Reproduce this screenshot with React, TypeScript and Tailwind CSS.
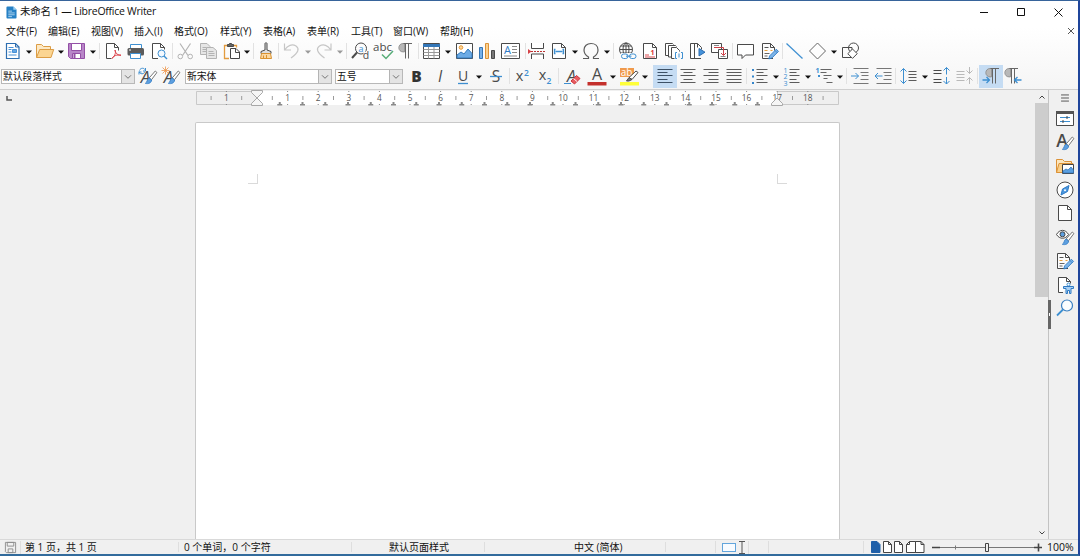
import type { ReactNode } from "react";
import clsx from "clsx";

const INK = "#4a4a4a";
const BLUE = "#3d8fd1";
const FADED = "#b9b9b9";

const menus = [
  { label: "文件(F)", width: "w-[42px]" },
  { label: "编辑(E)", width: "w-[43px]" },
  { label: "视图(V)", width: "w-[43px]" },
  { label: "插入(I)", width: "w-[40px]" },
  { label: "格式(O)", width: "w-[46px]" },
  { label: "样式(Y)", width: "w-[43px]" },
  { label: "表格(A)", width: "w-[44px]" },
  { label: "表单(R)", width: "w-[44px]" },
  { label: "工具(T)", width: "w-[42px]" },
  { label: "窗口(W)", width: "w-[47px]" },
  { label: "帮助(H)", width: "w-[40px]" },
];

// Every toolbar drawing lives on a 20x20 grid
function Icon({ children, className, color = INK }: { children: ReactNode; className?: string; color?: string }) {
  return (
    <svg
      viewBox="0 0 20 20"
      className={clsx("h-5 w-5 shrink-0 overflow-visible", className)}
      fill="none"
      stroke={color}
      strokeWidth="1"
    >
      {children}
    </svg>
  );
}

function Arrow({ className, faded }: { className?: string; faded?: boolean }) {
  return (
    <svg viewBox="0 0 6 4" className={clsx("mt-0.5 h-1 w-1.5 shrink-0", className)}>
      <path d="M0 .5h6L3 3.8z" fill={faded ? "#9a9a9a" : "#111"} />
    </svg>
  );
}

function Sep({ className }: { className?: string }) {
  return <span className={clsx("h-4 w-px shrink-0 bg-[#e2e2e2]", className)} />;
}

function Pressed({ children }: { children: ReactNode }) {
  return (
    <span className="-mx-0.5 flex h-[23px] w-6 shrink-0 items-center justify-center bg-[#c5dcf3]">{children}</span>
  );
}

function Combo({ value, className }: { value: string; className: string }) {
  return (
    <div className={clsx("mt-px flex h-[15px] shrink-0 border border-[#b8b8b8] bg-white", className)}>
      <span className="flex-1 overflow-hidden pl-px text-[9.8px] leading-[14px] whitespace-nowrap">{value}</span>
      <span className="flex w-[13px] items-center justify-center border-l border-[#b4b4b4] bg-[#e4e4e4]">
        <svg viewBox="0 0 8 6" className="h-1.5 w-2" fill="none" stroke="#666" strokeWidth=".9">
          <path d="M1 1.3l3 3 3-3" />
        </svg>
      </span>
    </div>
  );
}

function Glyph({ children, size = 14, y = 15, x = 10, weight = 400, fill = INK, italic }: {
  children: ReactNode; size?: number; y?: number; x?: number; weight?: number; fill?: string; italic?: boolean;
}) {
  return (
    <text x={x} y={y} fontSize={size} fontWeight={weight} fontStyle={italic ? "italic" : "normal"}
      fontFamily="'Open Sans', 'Noto Sans', sans-serif" textAnchor="middle" fill={fill} stroke="none">
      {children}
    </text>
  );
}

function Brush() {
  return (
    <>
      <path d="M17.3 5l1.6 1.5-5.4 7.2-2.300-1.800z" fill="#fff" stroke="#666" strokeWidth=".9" />
      <path d="M11 12l2.600 2c-.2 3.200-3.500 4.200-6.300 3.300 2.200-.8 1.500-4.300 3.700-5.300z" fill="#5d9fe0" stroke="#2e7ac4" strokeWidth=".8" />
    </>
  );
}

function Pencil() {
  return (
    <>
      <path d="M16.300 8.200l2.200 2.200-6.700 6.700-3 .8.8-3z" fill="#7db4e8" stroke="#2e7ac4" strokeWidth=".9" />
      <path d="M15 9.500l2.200 2.200" stroke="#2e7ac4" strokeWidth=".8" />
    </>
  );
}

function TrackDoc() {
  return (
    <>
      <path d="M13 17.500H2.500v-15h8l4 4v3" fill="#fcfcfc" />
      <path d="M10.500 2.500v4h4" />
      <path d="M4.500 6.500h4" stroke="#555" />
      <path d="M4.500 9.500h3m3 0h2" stroke="#e9a13b" />
      <path d="M4.500 12.500h5m-5 2.500h3" stroke="#666" />
      <Pencil />
    </>
  );
}

// Paragraph sign with the filled bowl
function Pilcrow({ dx = 0 }: { dx?: number }) {
  return (
    <g transform={`translate(${dx} 0)`}>
      <path d="M9.500 2.500H8a4.200 4.200 0 0 0 0 8.400h1.500z" fill="#b8b8b8" stroke="#888" strokeWidth=".8" />
      <path d="M8.500 2.500H17" stroke="#666" />
      <path d="M10.500 2.500v15m3-15v15" stroke="#666" />
    </g>
  );
}

function StandardBar() {
  return (
    <div className="flex h-6 items-center gap-[3px] pl-[3px]">
      <Icon color="#2e6eb0">
        <path d="M3.500 2.500h9l3.500 3.500v11.500H3.500z" fill="#fff" strokeWidth="1.200" />
        <path d="M12.500 2.500V6h3.500" />
        <path d="M5.500 6.500h5m-5 2h3m-3 2.500h3m-3 3h8" stroke="#4790d6" />
        <path d="M9.500 8.500h4v3h-4z" fill="#64a6e3" stroke="#4790d6" />
      </Icon>
      <Arrow />
      <Icon color="#dc9d45">
        <path d="M1.500 16.500v-13h5l2 2h7v3" fill="#fde9c4" />
        <path d="M1.500 16.500l3.200-8h14l-2.700 8z" fill="#fbd592" />
      </Icon>
      <Arrow />
      <Icon color="#9450a6">
        <path d="M1.500 2.500h16v15h-14l-2-2z" fill="#b886c8" />
        <path d="M4.500 2.500h10v7h-10z" fill="#fff" />
        <path d="M5.500 12.500h8v5h-8z" fill="#fff" />
        <path d="M7.500 13v4" strokeWidth="2" />
      </Icon>
      <Arrow />
      <Sep />
      <Icon>
        <path d="M8.500 17.500h-5v-15h8l4 4v3" fill="#fff" />
        <path d="M11.500 2.500v4h4" />
        <path d="M12 9c1.500 3-1 7-3 8.500 1-2.500 5-4.200 9-3.300-3 .6-6-2.500-6-5.200z" stroke="#dc4048" />
      </Icon>
      <Icon>
        <path d="M4.500 7V3.500h11V7" stroke={BLUE} fill="#fff" />
        <rect x="1.500" y="7" width="16.500" height="7.500" rx="1.500" fill="#5b5b5b" stroke="none" />
        <path d="M4.500 12.500h10v5h-10z" fill="#fff" stroke={BLUE} />
        <path d="M3 9h2" stroke="#fff" />
      </Icon>
      <Icon className="ml-px">
        <path d="M8 17.500H2.500v-15h8l4 4v2" fill="#fff" />
        <path d="M10.500 2.500v4h4" />
        <circle cx="11.500" cy="12.500" r="3.500" stroke={BLUE} fill="#f3f9ff" />
        <path d="M14 15l3 3" stroke={BLUE} strokeWidth="1.400" />
      </Icon>
      <Sep className="-ml-px" />
      <Icon className="-ml-px" color="#b3b3b3">
        <path d="M5 2.500l8 12M15.500 2.500l-8 12" strokeWidth="1.200" />
        <circle cx="5.300" cy="15.500" r="2.300" />
        <circle cx="15.200" cy="15.500" r="2.300" />
      </Icon>
      <Icon className="ml-px" color="#b3b3b3">
        <path d="M1.500 2.500H8l3 3v8H1.500zM3.500 6.500h4m-4 2h4m-4 2h4" fill="#e6e6e6" />
        <path d="M7.500 6.500H14l3.500 3v8h-10zM9.500 10.500h5m-5 2h6m-6 2h6" fill="#e6e6e6" />
      </Icon>
      <Icon>
        <path d="M7 17.500H2.500v-13h12v2" stroke="#e39b3e" strokeWidth="1.300" />
        <path d="M5.500 5.500v-2h2v-1h2v1h2v2z" fill="#666" />
        <path d="M8.500 7.500h5.500l3.500 3.500v6.500h-9z" fill="#fff" stroke="#444" />
        <path d="M13.500 7.500v4h4" />
      </Icon>
      <Arrow className="-ml-px" />
      <Sep />
      <Icon className="-ml-px">
        <path d="M9 9V2.500c0-1 2-1 2 0V9l4 1.500v2H5v-2z" fill="#ddd" />
        <path d="M5.500 12.500h9l1 5h-11z" fill="#fbd8a2" stroke="#d99230" />
        <path d="M7.500 17v-2.500m3 2.500v-3" stroke="#d99230" />
      </Icon>
      <Sep className="-ml-px" />
      <Icon color="#c6c6c6">
        <path d="M2.500 2.500v6.500H9M3 8.500c2.500-4 7-6 11-3.500 3.500 2.500 3 6-5 12" strokeWidth="1.200" />
      </Icon>
      <Arrow faded />
      <Icon color="#c6c6c6">
        <path d="M17 2.500v6.500h-6.500M16.500 8.500C14 4.500 9.500 2.500 5.500 5c-3.500 2.500-3 6 5 12" strokeWidth="1.200" />
      </Icon>
      <Arrow faded />
      <Sep />
      <Icon>
        <circle cx="11" cy="7.500" r="5.500" />
        <path d="M7 11.500l-5 5.500" strokeWidth="2" />
        <Glyph x={11} y={10.500} size={9} fill={BLUE}>a</Glyph>
        <path d="M13.500 10.500h5v8h-5z" fill="#fafafa" stroke="none" />
        <Glyph x={16} y={18} size={10.500}>d</Glyph>
      </Icon>
      <Icon>
        <Glyph x={9.500} y={9.500} size={11.500}>abc</Glyph>
        <path d="M9 13.500l4 4 7-7.500" stroke="#58ad77" strokeWidth="1.500" />
      </Icon>
      <Icon>
        <Pilcrow dx={-1} />
      </Icon>
      <Sep className="-ml-px" />
      <Icon>
        <path d="M1.500 2.500h16v15h-16z" fill="#fff" />
        <path d="M1 3h17v3H1z" fill="#3477b8" stroke="none" />
        <path d="M1.500 8.500h16m-16 3h16m-16 3h16M6.500 6v11.500m5.500-11.500v11.500" stroke="#999" />
      </Icon>
      <Arrow />
      <Icon>
        <path d="M2.500 2.500h16v15h-16z" fill="#fff" />
        <circle cx="7" cy="6.500" r="1.800" stroke="#e99a35" fill="#fbd79d" />
        <path d="M3 17v-3l4-3 3 2 4-5 4 4.500V17z" fill="#6cabe5" stroke="#3079bd" />
      </Icon>
      <Icon>
        <path d="M2.500 6.500h3v11h-3z" fill="#76b0e8" stroke="#3575b3" />
        <path d="M8.500 2.500h3v15h-3z" fill="#fbd190" stroke="#dc9237" />
        <path d="M14.500 9.500h3v8h-3z" fill="#777" />
      </Icon>
      <Icon className="ml-px">
        <path d="M.5 2.500h18v15H.5z" fill="#fff" />
        <Glyph x={6.500} y={13} size={11} fill="#2e7ac4">A</Glyph>
        <path d="M11 5.500h5m-5 3h5m-5 3h5m-13 3.500h13" stroke="#888" />
      </Icon>
      <Sep className="ml-px" />
      <Icon className="-ml-0.5">
        <path d="M4.500 2v5.500h12V2M4.500 18v-5h12v5" fill="#fff" />
        <path d="M4 10.500h15" stroke="#b33" strokeDasharray="2 1" />
        <path d="M1 8l3.500 2.500L1 13z" fill="#d54045" stroke="none" />
      </Icon>
      <Icon>
        <path d="M2.500 2.500h9l4 4v11h-13z" fill="#fff" />
        <path d="M11.500 2.500v4h4" />
        <path d="M5.500 8.500H4.500v4h1m7-4h1v4h-1M5.500 10.500h7" stroke={BLUE} strokeWidth="1.300" />
      </Icon>
      <Arrow className="-ml-px" />
      <Icon>
        <path d="M2 17.500h5.500V16C4 14 3 11.500 3 9c0-4 3-6.500 7-6.500S17 5 17 9c0 2.500-1 5-4.500 7v1.500H18" stroke="#5b5b5b" strokeWidth="1.200" />
      </Icon>
      <Arrow />
      <Sep />
      <Icon>
        <circle cx="9" cy="8.500" r="6.500" />
        <path d="M9 2v13M2.500 8.500h13M4 5h10M4 12h10" />
        <ellipse cx="9" cy="8.500" rx="3" ry="6.500" />
        <path d="M4 12h16v7H4z" fill="#fbfbfb" stroke="none" />
        <rect x="4.500" y="13" width="6.500" height="4.500" rx="2.200" stroke={BLUE} />
        <rect x="12.500" y="13" width="6.500" height="4.500" rx="2.200" stroke={BLUE} />
        <path d="M9 15.200h5.500" stroke={BLUE} />
      </Icon>
      <Icon>
        <path d="M3.500 2.500h9l4 4v11h-13z" fill="#fff" />
        <path d="M12.500 2.500v4h4" />
        <path d="M5 16h10m-10-2h4" stroke="#d94b50" />
        <Glyph x={12.500} y={13.500} size={7} fill="#d33" weight={700}>1</Glyph>
      </Icon>
      <Icon className="ml-px">
        <path d="M5 14.500H1.500v-12h7l1 1" fill="#fff" />
        <path d="M8 16H4.500V4.500h7l1 1" fill="#fff" />
        <path d="M10.500 17.500h-3v-11h5l3 3v1" fill="#fff" />
        <path d="M13 11.500h-1.500v6H13m4-6h1.500v6H17m-2-5v4" stroke={BLUE} />
      </Icon>
      <Icon>
        <path d="M11 17.500H3.500v-15h7l4 4v2" fill="#fff" />
        <path d="M10.500 2.500v4M7.500 3v14" />
        <path d="M10 17.500h4" />
        <path d="M12 7.500l6 3.700-6 3.700z" fill="#4694dc" stroke="#2e6eb0" />
      </Icon>
      <Icon>
        <path d="M1.500 2.500h10v9h-10z" fill="#fff" />
        <path d="M8.500 8.500h9v9h-9z" fill="#fff" />
        <path d="M4 6.500h9.500V14m-2.500-2l2.500 2.500L16 12" stroke="#cf4148" />
        <path d="M4 4.500h5m1.500 11h5" stroke="#888" />
      </Icon>
      <Sep className="-ml-px" />
      <Icon>
        <path d="M1.500 3.500h16v10.500H9.500L6 17.500V14H1.500z" fill="#fff" />
      </Icon>
      <Icon className="ml-px">
        <TrackDoc />
      </Icon>
      <Sep className="-ml-px" />
      <Icon className="-ml-px" color={BLUE}>
        <path d="M1.500 2.500l16 15" strokeWidth="1.200" />
      </Icon>
      <Icon>
        <path d="M9.500 2l8 8-8 8-8-8z" fill="#fdfdfd" stroke="#666" />
      </Icon>
      <Arrow />
      <Icon className="ml-px">
        <path d="M1.500 6.500h9.500v10H1.500z" />
        <circle cx="12.500" cy="7" r="5" />
        <path d="M11.500 8l4.700 4.700-4.700 4.700-4.700-4.700z" fill="#fff" />
      </Icon>
    </div>
  );
}

function FormatBar() {
  return (
    <div className="flex h-[26px] items-center gap-[3px] pl-px">
      <Combo value="默认段落样式" className="w-[134px]" />
      <Icon>
        <Glyph x={7.500} y={17} size={17} italic weight={500}>A</Glyph>
        <Brush />
        <path d="M1.500 4.500c1-3 5-3 6 0m-6.500 1c1 3 5 3 6 0M7.500 2v3H5M1 8.500V6h2.500" stroke={BLUE} />
      </Icon>
      <Icon>
        <Glyph x={7.500} y={17} size={17} italic weight={500}>A</Glyph>
        <Brush />
        <path d="M4.500.5v8m-4-4h8M1.500 1.500l6 6m0-6l-6 6" stroke="#ee9448" strokeWidth=".8" />
      </Icon>
      <Combo value="新宋体" className="ml-px w-[147px]" />
      <Combo value="五号" className="w-[68px]" />
      <Icon className="ml-px">
        <Glyph x={9.500} size={15.500} y={16} weight={800} fill="#333">B</Glyph>
      </Icon>
      <Icon>
        <Glyph x={10} size={15.500} y={16} italic>I</Glyph>
      </Icon>
      <Icon>
        <Glyph size={14} y={15}>U</Glyph>
        <path d="M5 17.500h10" stroke={BLUE} strokeWidth="1.300" />
      </Icon>
      <Arrow />
      <Icon className="ml-px">
        <Glyph size={15.500} y={16}>S</Glyph>
        <path d="M4 10.500h12" stroke={BLUE} strokeWidth="1.300" />
      </Icon>
      <Sep />
      <Icon className="-ml-px">
        <Glyph x={7.500} y={15} size={14.500} weight={500}>x</Glyph>
        <Glyph x={14.500} y={10} size={8.500} weight={600} fill={BLUE}>2</Glyph>
      </Icon>
      <Icon>
        <Glyph x={7.500} y={14} size={14.500} weight={500}>x</Glyph>
        <Glyph x={14} y={18} size={8.500} weight={600} fill={BLUE}>2</Glyph>
      </Icon>
      <Sep />
      <Icon>
        <Glyph x={9.500} y={15.500} size={16} italic>A</Glyph>
        <path d="M2 17.500h7" stroke={BLUE} />
        <path d="M14.500 9.500l3.500 3-5.500 5.500-3.500-3z" fill="#e75c61" stroke="#cc353b" />
        <path d="M11.500 12.500l3.500 3" stroke="#fff" />
      </Icon>
      <Icon className="ml-0.5">
        <Glyph size={16} y={13.500} weight={500}>A</Glyph>
        <path d="M.5 16h19v3.500H.5z" fill="#c4302c" stroke="none" />
      </Icon>
      <Arrow />
      <Icon>
        <path d="M1 2h14v9H1z" fill="#f09a4c" stroke="none" />
        <Glyph x={7.500} y={9.500} size={10} fill="#fff">ab</Glyph>
        <path d="M17 5l2 1.500-6 7-3-2z" fill="#fff" />
        <path d="M10 11.500l3 2-3 1.500H7.500z" fill="#777" />
        <path d="M1 16h19v3.500H1z" fill="#ffff38" stroke="none" />
      </Icon>
      <Arrow />
      <span className="w-px" />
      <Pressed>
        <Icon>
          <path d="M2.500 3.500h15m-15 3h10m-10 3h15m-15 4h10m-10 3h15" stroke="#3d5166" />
        </Icon>
      </Pressed>
      <Icon color="#5c5c5c">
        <path d="M2.500 3.500h15m-12 3h9m-12 3h15m-12 4h9m-12 3h15" />
      </Icon>
      <Icon color="#5c5c5c">
        <path d="M2.500 3.500h15m-10 3h10m-15 3h15m-10 4h10m-15 3h15" />
      </Icon>
      <Icon color="#5c5c5c">
        <path d="M2.500 3.500h15m-15 3h15m-15 3h15m-15 4h15m-15 3h15" />
      </Icon>
      <Sep className="-ml-px" />
      <Icon color="#5c5c5c">
        <path d="M2 3h2v2H2zm0 6.500h2v2H2zM2 16h2v2H2z" fill="#3486cc" stroke="none" />
        <path d="M6.500 3.500h11m-11 3h7m-7 3h11m-11 4h7m-7 3h11" />
      </Icon>
      <Arrow />
      <Icon color="#5c5c5c">
        <Glyph x={3.500} y={6.500} size={7} fill={BLUE}>1</Glyph>
        <Glyph x={3.500} y={13} size={7} fill={BLUE}>2</Glyph>
        <Glyph x={3.500} y={19.500} size={7} fill={BLUE}>3</Glyph>
        <path d="M7.500 3.500h10m-10 3h7m-7 3h10m-10 4h7m-7 3h10" />
      </Icon>
      <Arrow />
      <Icon>
        <Glyph x={3.500} y={7} size={7} weight={700} fill={BLUE}>1</Glyph>
        <path d="M4 9h2v2H4z" fill={BLUE} stroke="none" />
        <path d="M6.500 3.500h11m-11 3h6m-3 3h8m-8 3h4m-1 4h6" stroke="#666" />
      </Icon>
      <Arrow />
      <Sep />
      <Icon>
        <path d="M3.500 2.500h15m-8 4h8m-7 3h7m-8 4h8m-15 4h15" stroke="#777" />
        <path d="M1 10h7.500m-3-3l3 3-3 3" stroke={BLUE} />
      </Icon>
      <Icon>
        <path d="M3.500 2.500h15m-8 4h8m-7 3h7m-8 4h8m-15 4h15" stroke="#777" />
        <path d="M9.500 10H2m3-3l-3 3 3 3" stroke={BLUE} />
      </Icon>
      <Sep className="-ml-px" />
      <Icon className="-ml-px">
        <path d="M5.500 2.500v15m-3-12l3-3 3 3m-6 9l3 3 3-3" stroke={BLUE} />
        <path d="M10.500 5.500h8m-8 3h8m-8 3h8m-8 3h8" stroke="#5c5c5c" />
      </Icon>
      <Arrow className="ml-px" />
      <Icon className="ml-px">
        <path d="M1.500 4.500h8m-8 3h8m-8 6h8m-8 3h8" />
        <path d="M14.500 8.500v-7m-3 3l3-3 3 3m-3 6.500v7m-3-3l3 3 3-3" stroke={BLUE} />
      </Icon>
      <Icon color={FADED}>
        <path d="M1.500 5.500h8m-8 3h8m-8 3h8m-8 3h8M14.500 1v6.500m-3-3l3 3 3-3m-3 13.500v-6.500m-3 3l3-3 3 3" />
      </Icon>
      <Sep className="-ml-px" />
      <Pressed>
        <Icon>
          <Pilcrow dx={1} />
          <path d="M1.500 14h7m-3-3l3 3-3 3" stroke={BLUE} strokeWidth="1.300" />
        </Icon>
      </Pressed>
      <Icon className="-ml-px">
        <Pilcrow dx={-2} />
        <path d="M18.500 14h-7m3-3l-3 3 3 3" stroke={BLUE} strokeWidth="1.300" />
      </Icon>
    </div>
  );
}

// Horizontal ruler; the text area runs from 0 to 17 cm
function Ruler() {
  const cm = 30.6;
  const zero = 62;
  const numbers = Array.from({ length: 18 }, (_, i) => i + 1);
  const halves = Array.from({ length: 21 }, (_, i) => i - 1.5);
  const tabs = Array.from({ length: 22 }, (_, i) => zero + (i + 1) * 22.75);
  return (
    <svg viewBox="0 0 644 16" className="h-4 w-[644px]">
      <path d="M1.500 1.500h60v13h-60zM582.500 1.500h61v13h-61z" fill="#efefef" stroke="#c9c9c9" />
      <path d="M62 1h520v14H62z" fill="#fff" />
      {halves.filter((h) => h < 19).map((h) => (
        <path key={h} d={`M${zero + h * cm} 6v4`} stroke="#9a9a9a" />
      ))}
      {[-1, ...numbers].map((n) => (
        <g key={n}>
          <path d={`M${zero + n * cm} 1v1m0 12v1`} stroke="#8a8a8a" />
          <text x={zero + n * cm} y="11" fontSize="8.3" textAnchor="middle" fill="#555"
            fontFamily="'Open Sans', sans-serif">
            {Math.abs(n)}
          </text>
        </g>
      ))}
      {tabs.map((x) => (
        <path key={x} d={`M${x - 2.500} 15.500v-1.500h1.500v-2h2v2h1.500v1.500z`} fill="#8a8a8a" />
      ))}
      <path d="M56.500.5h11v2L62 8l-5.500-5.500zM56.500 15.500h11v-2L62 8l-5.500 5.500z" fill="#f6f6f6" stroke="#a8a8a8" />
      <path d="M576.500 15.500h11v-2L582 8l-5.500 5.500z" fill="#f6f6f6" stroke="#a8a8a8" />
    </svg>
  );
}

function Sidebar() {
  return (
    <aside className="relative flex w-[30px] flex-col items-center gap-[3.9px] border-l border-[#c3c3c3] bg-[#f0f0f0] pl-0.5">
      <svg viewBox="0 0 20 16" className="mt-px h-[14px] w-5" fill="none" stroke="#444">
        <path d="M5.500 4.500h9m-9 3.500h9m-9 3.500h9" />
      </svg>
      <Icon className="-mt-px">
        <path d="M1.500 3.500h17v14h-17z" fill="#fff" />
        <path d="M1 3h18v3H1z" fill="#555" stroke="none" />
        <path d="M5 9.500h10m-10 4h10" stroke={BLUE} />
        <path d="M12 8v3m-4 1v3" stroke="#444" />
      </Icon>
      <Icon>
        <Glyph x={7} y={15} size={17.500} weight={600}>A</Glyph>
        <Brush />
      </Icon>
      <Icon>
        <path d="M1.500 16.500v-13h6l2 2h7v3" fill="#fce6bd" stroke="#dc9237" />
        <path d="M1.500 16.500l2.500-9h14v9z" fill="#fad08a" stroke="#dc9237" />
        <path d="M7.500 8.500h11v9h-11z" fill="#fff" stroke="#444" />
        <path d="M8 17v-2l3-2 2 1 3-3 2.500 3v3z" fill="#5a9fe0" stroke="#2e6eb0" strokeWidth=".7" />
      </Icon>
      <Icon>
        <circle cx="10" cy="10" r="8" fill="#fff" />
        <path d="M14 5.500l-1.500 6-6.500 3.500 1.500-6z" fill="#4c98df" stroke="#2e7ac4" />
        <circle cx="10" cy="10.200" r="1" fill="#fff" stroke="none" />
      </Icon>
      <Icon>
        <path d="M3.500 2.500h9l4 4v11h-13z" fill="#fff" />
        <path d="M12.500 2.500v4h4" />
      </Icon>
      <Icon>
        <path d="M1.500 7.500c3-5.500 9-5.500 12 0-3 5-9 5-12 0z" fill="#fff" />
        <circle cx="7.500" cy="7.300" r="2.500" fill="#5d9fe0" stroke="#444" />
        <Brush />
      </Icon>
      <Icon className="ml-px">
        <TrackDoc />
      </Icon>
      <Icon>
        <path d="M8 17.500H3.500v-15h8l4 4v2" fill="#fff" />
        <path d="M11.500 2.500v4h4" />
        <circle cx="13.500" cy="9.500" r="1.500" fill="#fff" stroke={BLUE} />
        <path d="M8.500 11.500h10v2H16v5h-1.500v-3h-2v3H11v-5H8.500z" fill="#a9d0f3" stroke="#2e7ac4" />
      </Icon>
      <Icon className="-mt-px">
        <circle cx="12" cy="7.500" r="5.500" fill="#fafdff" stroke="#397fc1" strokeWidth="1.200" />
        <path d="M8 11.500l-6 6" stroke={BLUE} strokeWidth="1.800" />
      </Icon>
      {/* collapse handle of the deck */}
      <span className="absolute top-[210px] -left-px flex h-[29px] w-[3px] items-center justify-center bg-[#666]">
        <span className="h-[3px] w-px bg-white" />
      </span>
    </aside>
  );
}

function StatusBar() {
  return (
    <footer className="flex h-[15px] shrink-0 items-center border-t border-[#d9d9d9] bg-[#f0f0f0] text-[10px] leading-none whitespace-nowrap">
      <div className="flex w-[21px] items-center justify-center border-r border-[#dedede]">
        <svg viewBox="0 0 14 14" className="h-[13px] w-[13px]" fill="none" stroke="#8d8d8d">
          <path d="M1.500 1.500h11v11h-10l-1-1zM3.500 1.500h7v4h-7zM4.500 8.500h5v4h-5z" />
        </svg>
      </div>
      <span className="w-[158px] border-r border-[#dedede] pl-1">第 1 页，共 1 页</span>
      <span className="w-[173px] border-r border-[#dedede] pl-[5px]">0 个单词，0 个字符</span>
      <span className="w-[133px] border-r border-[#dedede] pl-0.5 text-center">默认页面样式</span>
      <span className="w-[181px] border-r border-[#dedede] pl-[89px]">中文 (简体)</span>
      <span className="h-3 w-[50px] border-r border-[#dedede]" />
      <div className="flex w-[33px] items-center gap-px border-r border-[#dedede] pl-1.5">
        <span className="h-[9px] w-[14px] border border-[#62a5dc] bg-[#f7fbff]" />
        <svg viewBox="0 0 8 13" className="h-[13px] w-2" fill="none" stroke="#555">
          <path d="M2 .5h6M2 12.500h6M5 .5v12" />
        </svg>
      </div>
      <span className="h-3 w-5 border-r border-[#dedede]" />
      <span className="h-3 w-[95px] border-r border-[#dedede]" />
      <svg viewBox="0 0 58 14" className="ml-[5px] h-[14px] w-[58px]" fill="#fff" stroke="#444">
        <path d="M2.500 1.500H8l3 3v8H2.500z" fill="#1f60a9" stroke="#1f60a9" />
        <path d="M14.500 1.500h5l3 3v8h-8zM19.500 1.500v3h3M25.500 1.500h5l3 3v8h-8zM30.500 1.500v3h3" />
        <path d="M37.500 4.500l3-3h6v11h-9zM46.500 1.500H52l3 3v8h-8.500zM40.500 1.500v3h-3M52 1.500v3h3" />
      </svg>
      <svg viewBox="0 0 112 14" className="ml-1 h-[14px] w-[112px]" fill="none" stroke="#444">
        <path d="M1 7.500h8M103 7.500h8M107.500 3.500v8" strokeWidth="1.600" />
        <path d="M9 7.500h94M24.500 5.500v4" stroke="#777" />
        <path d="M54.500 3.500h3v8h-3z" fill="#eee" />
      </svg>
      <span className="ml-1 text-[10.5px]">100%</span>
    </footer>
  );
}

export default function App() {
  return (
    <div className="flex h-[556px] w-[1080px] flex-col overflow-hidden border-t border-r-2 border-b-2 border-t-[#37649b] border-r-[#1f459b] border-b-[#326b9c] bg-[#f0f0f0] font-['Open_Sans','Noto_Sans_CJK_SC',sans-serif] text-[10px] text-[#111]">
      <header className="shrink-0 border-b border-[#cfcfcf] bg-linear-to-b from-white from-30% to-[#f5f5f5]">
        <div className="flex h-[22px] items-center pl-1.5">
          <svg viewBox="0 0 12 14" className="h-[13px] w-[11px]">
            <path d="M1.500.5H8l3.500 3.500v8.500q0 1-1 1h-9q-1 0-1-1v-11q0-1 1-1z" fill="#2580c5" />
            <path d="M8 .5V4h3.500z" fill="#9bd0f3" />
            <path d="M2.500 5.500h4m-4 2h7m-7 2h7m-7 2h4" stroke="#d7edfb" strokeWidth=".8" />
          </svg>
          <span className="ml-[3px] text-[10.5px] tracking-[-0.27px]">未命名 1 — LibreOffice Writer</span>
          <svg viewBox="0 0 90 12" className="mr-3 ml-auto h-3 w-[90px]" fill="none" stroke="#111">
            <path d="M4 6.500h8M41.500 2.500h7v7h-7zM78.500 2.500l8 8m0-8l-8 8" />
          </svg>
        </div>
        <nav className="flex h-4 items-center pl-1.5">
          {menus.map((menu) => (
            <span key={menu.label} className={clsx("shrink-0 whitespace-nowrap", menu.width)}>
              {menu.label}
            </span>
          ))}
          <svg viewBox="0 0 8 8" className="mr-[3px] ml-auto h-2 w-2" fill="none" stroke="#555">
            <path d="M1 1l6 6m0-6l-6 6" />
          </svg>
        </nav>
        <StandardBar />
        <FormatBar />
      </header>

      <main className="flex min-h-0 flex-1">
        <section className="flex min-w-0 flex-1 flex-col">
          <div className="flex h-4 shrink-0 items-center">
            <svg viewBox="0 0 6 6" className="mr-[183px] ml-1.5 h-1.5 w-1.5">
              <path d="M1 1v4h5" fill="none" stroke="#555" strokeWidth="1.500" />
            </svg>
            <Ruler />
          </div>
          <div className="mt-4 ml-[195px] flex w-[645px] flex-1 justify-between rounded-t-xs border border-b-0 border-[#c9c9c9] bg-white px-[52px] pt-[51px]">
            <span className="h-2.5 w-2.5 border-r border-b border-[#dadada]" />
            <span className="h-2.5 w-2.5 border-b border-l border-[#dadada]" />
          </div>
        </section>
        <div className="flex w-[13px] shrink-0 flex-col items-center">
          <svg viewBox="0 0 8 13" className="h-[13px] w-2 shrink-0" fill="none" stroke="#444">
            <path d="M1.500 8.500L4 6l2.500 2.500" />
          </svg>
          <span className="h-[194px] w-full bg-[#cdcdcd]" />
          <svg viewBox="0 0 8 13" className="mt-auto h-[13px] w-2 shrink-0" fill="none" stroke="#444">
            <path d="M1.500 5.500L4 8l2.500-2.500" />
          </svg>
        </div>
        <Sidebar />
      </main>

      <StatusBar />
    </div>
  );
}
